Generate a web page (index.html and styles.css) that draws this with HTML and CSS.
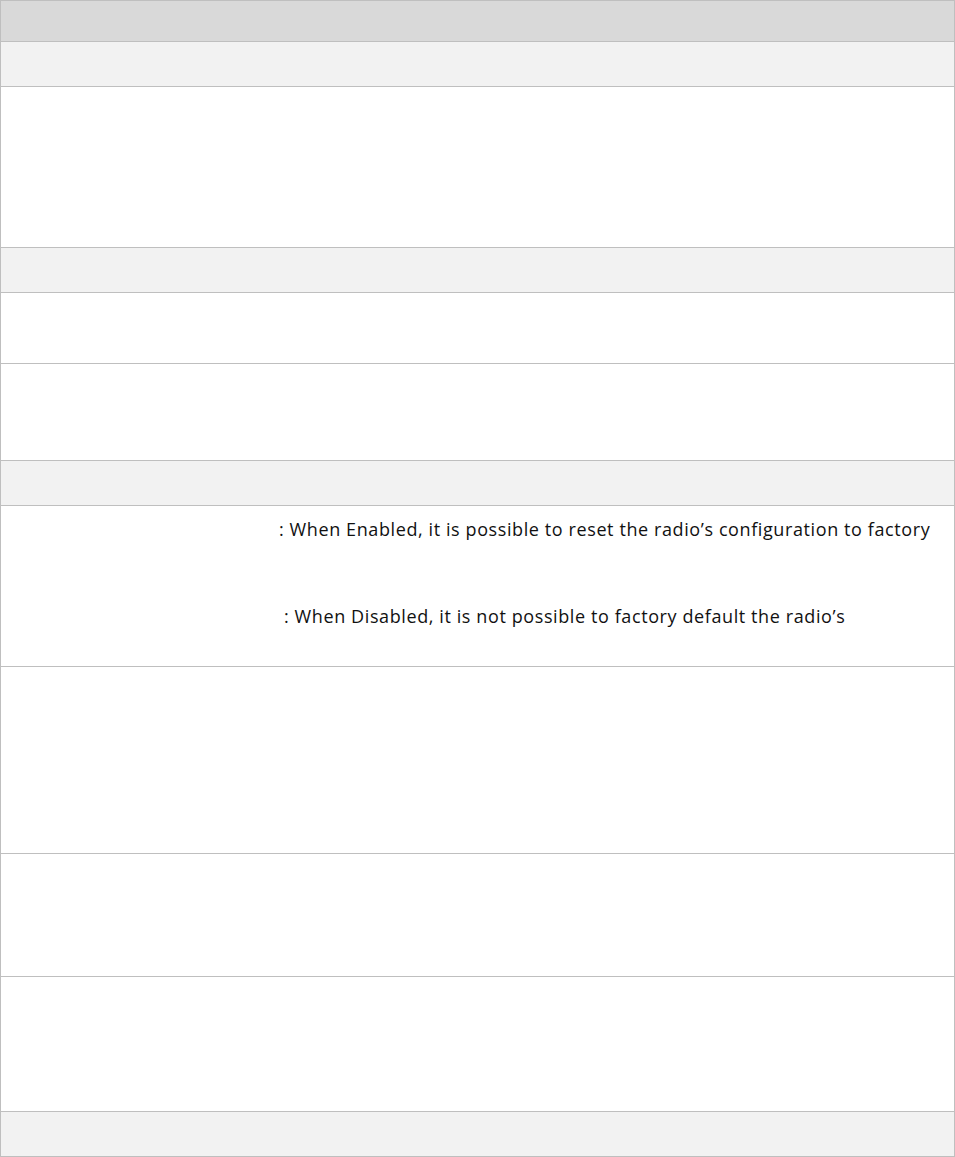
FILE: index.html
```html
<!DOCTYPE html>
<html lang="en">
<head>
    <meta charset="UTF-8">
    <meta name="viewport" content="width=device-width, initial-scale=1.0">
    <title>Factory Reset Settings</title>
    <link rel="stylesheet" href="styles.css">
</head>
<body>
    <div class="table">
        <div class="row head"></div>
        <div class="row section"></div>
        <div class="row h160"></div>
        <div class="row section"></div>
        <div class="row h70"></div>
        <div class="row h96"></div>
        <div class="row section"></div>
        <!-- Factory reset options -->
        <div class="row h160 desc">
            <p class="opt opt-enabled">: When Enabled, it is possible to reset the radio’s configuration to factory</p>
            <p class="opt opt-disabled">: When Disabled, it is not possible to factory default the radio’s</p>
        </div>
        <div class="row h186"></div>
        <div class="row h122"></div>
        <div class="row h134"></div>
        <div class="row section"></div>
    </div>
</body>
</html>
```

FILE: styles.css
```css
body {
    margin: 0;
    padding: 0;
    background-color: #ffffff;
    font-family: "Open Sans", "Liberation Sans", sans-serif;
    color: #111111;
}
.table {
    width: 955px;
    box-sizing: border-box;
    border: 1px solid #bfbfbf;
    border-bottom: none;
}
.row {
    border-bottom: 1px solid #bfbfbf;
    background-color: #ffffff;
}
.head {
    height: 40px;
    background-color: #d9d9d9;
}
.section {
    height: 44px;
    background-color: #f2f2f2;
}
.h70 { height: 70px; }
.h96 { height: 96px; }
.h122 { height: 122px; }
.h134 { height: 134px; }
.h160 { height: 160px; }
.h186 { height: 186px; }
.desc {
    display: flex;
    flex-direction: column;
}
.opt {
    margin: 0;
    font-size: 18px;
    line-height: 20px;
    letter-spacing: 0.6px;
    white-space: nowrap;
}
.opt-enabled {
    padding: 13px 0 0 278px;
}
.opt-disabled {
    padding: 67px 0 0 283px;
}
```
